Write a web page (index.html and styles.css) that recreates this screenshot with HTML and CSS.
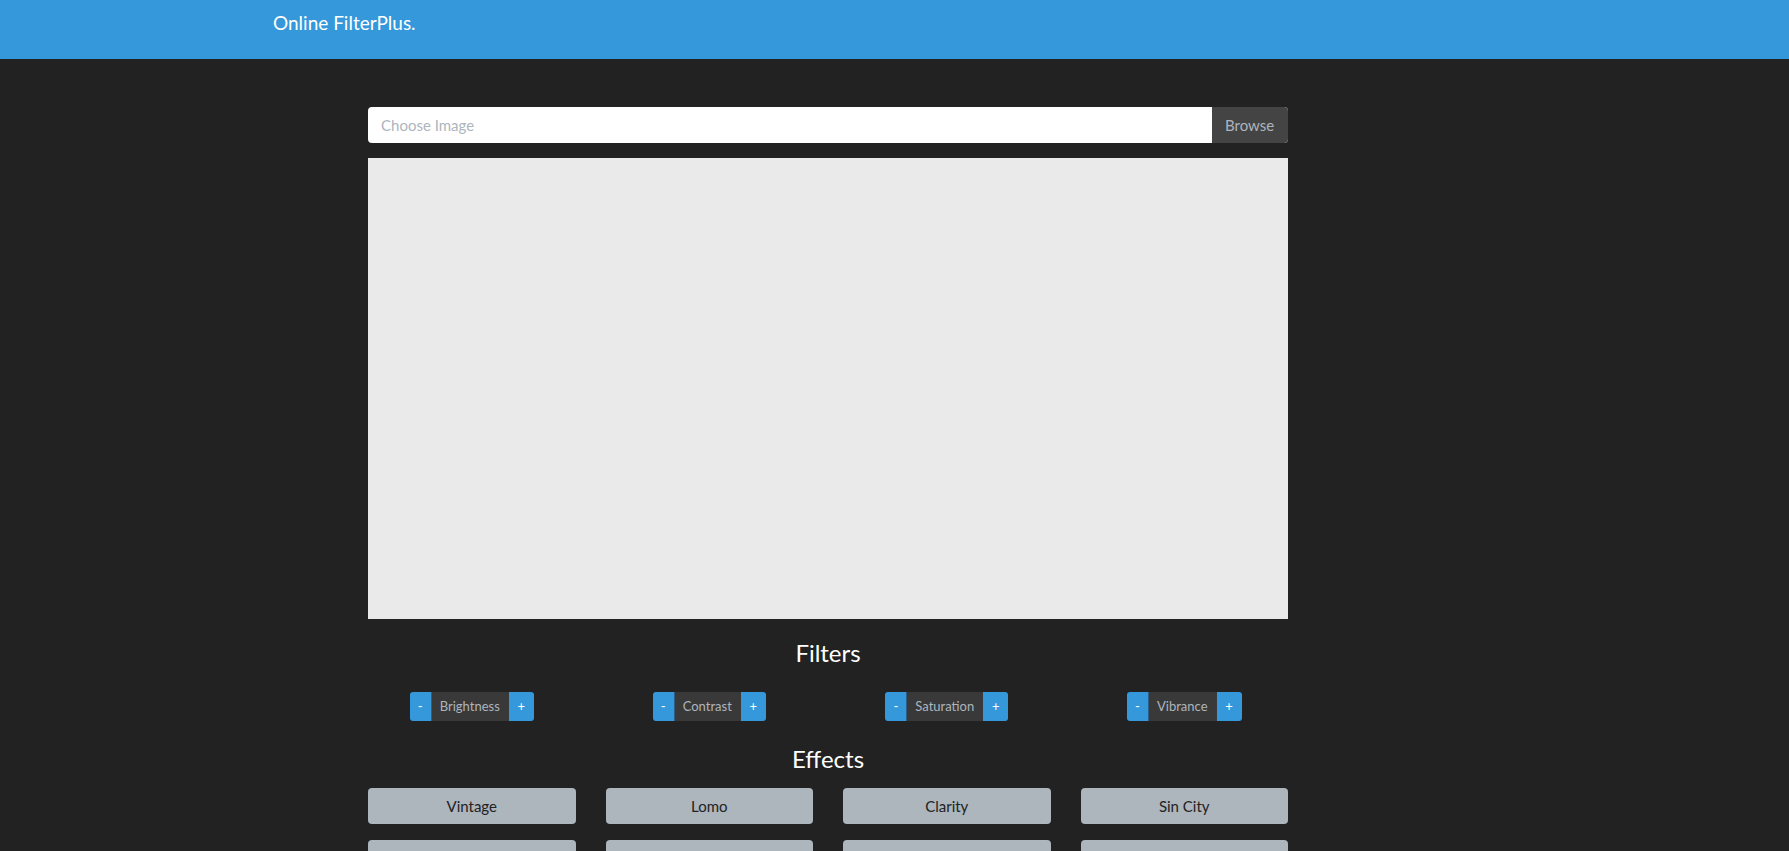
FILE: index.html
```html
<!DOCTYPE html>
<html lang="en">
<head>
<meta charset="utf-8">
<title>Online FilterPlus.</title>
<link rel="stylesheet" href="styles.css">
</head>
<body>
<header class="navbar">
  <a class="brand" href="#">Online FilterPlus.</a>
</header>
<main class="main">
  <div class="file-input">
    <span class="file-label">Choose Image</span>
    <span class="file-browse">Browse</span>
  </div>
  <div class="canvas-area"></div>

  <h3 class="section-title">Filters</h3>
  <div class="filter-row">
    <div class="filter-cell">
      <div class="filter-group">
        <button class="fbtn fbtn-minus">-</button>
        <span class="flabel">Brightness</span>
        <button class="fbtn fbtn-plus">+</button>
      </div>
    </div>
    <div class="filter-cell">
      <div class="filter-group">
        <button class="fbtn fbtn-minus">-</button>
        <span class="flabel">Contrast</span>
        <button class="fbtn fbtn-plus">+</button>
      </div>
    </div>
    <div class="filter-cell">
      <div class="filter-group">
        <button class="fbtn fbtn-minus">-</button>
        <span class="flabel">Saturation</span>
        <button class="fbtn fbtn-plus">+</button>
      </div>
    </div>
    <div class="filter-cell">
      <div class="filter-group">
        <button class="fbtn fbtn-minus">-</button>
        <span class="flabel">Vibrance</span>
        <button class="fbtn fbtn-plus">+</button>
      </div>
    </div>
  </div>

  <h3 class="section-title effects-title">Effects</h3>
  <div class="effects-grid">
    <button class="ebtn">Vintage</button>
    <button class="ebtn">Lomo</button>
    <button class="ebtn">Clarity</button>
    <button class="ebtn">Sin City</button>
    <button class="ebtn">Cross Process</button>
    <button class="ebtn">Pinhole</button>
    <button class="ebtn">Nostalgia</button>
    <button class="ebtn">Her Majesty</button>
  </div>
</main>
</body>
</html>
```

FILE: styles.css
```css
html {
  background: #222222;
}
::-webkit-scrollbar {
  width: 11px;
  background: #f1f1f1;
}
::-webkit-scrollbar-thumb {
  background: #cdcdcd;
}
body {
  margin: 0;
  background: #222222;
  color: #ffffff;
  font-family: Lato, "Open Sans", "Liberation Sans", sans-serif;
  font-size: 15px;
}
.navbar {
  height: 59px;
  box-sizing: border-box;
  background: #3498db;
  padding: 12px 0 0 273px;
}
.brand {
  color: #ffffff;
  text-decoration: none;
  font-size: 19px;
  line-height: 1.2;
}
.main {
  width: 920px;
  margin: 48px 0 0 368px;
  padding-bottom: 50px;
}
.file-input {
  display: flex;
  height: 36px;
  border-radius: 4px;
  overflow: hidden;
  background: #ffffff;
}
.file-label {
  flex: 1;
  display: flex;
  align-items: center;
  padding-left: 13px;
  color: #adb5bd;
  line-height: 1.2;
}
.file-browse {
  width: 76px;
  box-sizing: border-box;
  display: flex;
  align-items: center;
  padding-left: 13px;
  background: #444444;
  color: #adb5bd;
  line-height: 1.2;
}
.canvas-area {
  margin-top: 15px;
  height: 461px;
  background: #eaeaea;
}
.section-title {
  margin: 20px 0 0;
  font-size: 24px;
  font-weight: 400;
  line-height: 1.2;
  text-align: center;
  color: #ffffff;
}
.filter-row {
  display: grid;
  grid-template-columns: repeat(4, 1fr);
  margin: 24px -15px 0;
}
.filter-cell {
  display: flex;
  justify-content: center;
}
.filter-group {
  display: flex;
  height: 29px;
  border-radius: 3px;
  overflow: hidden;
}
.fbtn {
  border: 0;
  margin: 0;
  padding: 0;
  background: #3498db;
  color: #ffffff;
  font-family: Lato, "Open Sans", "Liberation Sans", sans-serif;
  font-size: 13px;
  line-height: 1.2;
}
.fbtn-minus {
  width: 22px;
  border-right: 1px solid #2b5f8a;
}
.fbtn-plus {
  width: 25px;
}
.flabel {
  display: flex;
  align-items: center;
  padding: 0 9px 0 8px;
  background: #393939;
  color: #adb5bd;
  font-size: 13px;
  line-height: 1.2;
}
.effects-title {
  margin-top: 24px;
}
.effects-grid {
  display: grid;
  grid-template-columns: repeat(4, 1fr);
  column-gap: 30px;
  row-gap: 16px;
  margin-top: 14px;
}
.ebtn {
  height: 36px;
  border: 0;
  border-radius: 4px;
  background: #adb5bd;
  color: #222222;
  font-family: Lato, "Open Sans", "Liberation Sans", sans-serif;
  font-size: 15px;
  line-height: 1.2;
  padding: 0;
}
```
